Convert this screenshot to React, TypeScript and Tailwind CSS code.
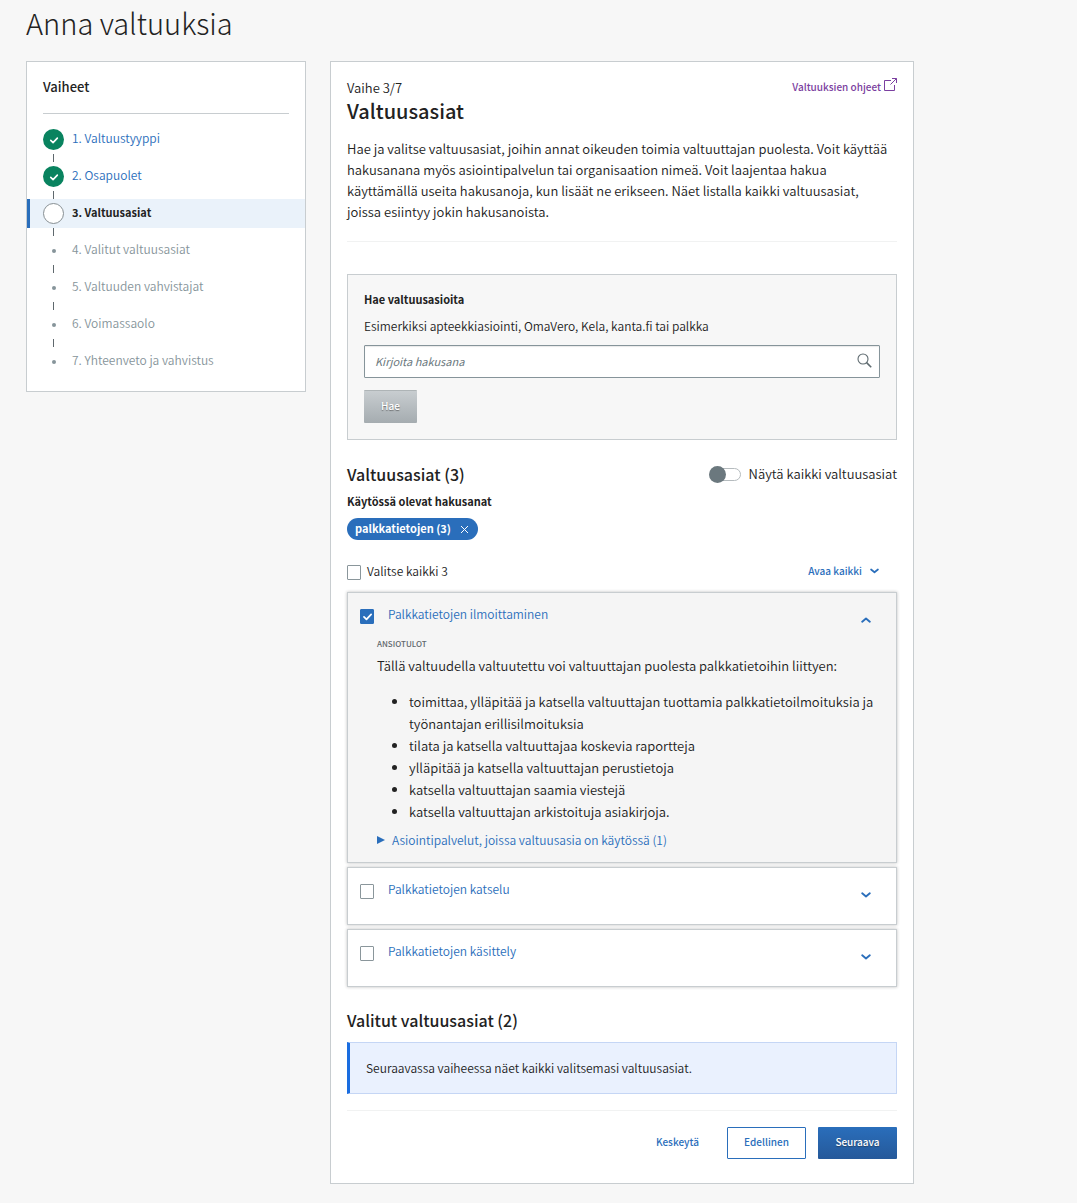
import { useState } from "react";
import type { ReactNode } from "react";

type Step = { name: string; state: "done" | "current" | "todo" };

const steps: Step[] = [
    { name: "Valtuustyyppi", state: "done" },
    { name: "Osapuolet", state: "done" },
    { name: "Valtuusasiat", state: "current" },
    { name: "Valitut valtuusasiat", state: "todo" },
    { name: "Valtuuden vahvistajat", state: "todo" },
    { name: "Voimassaolo", state: "todo" },
    { name: "Yhteenveto ja vahvistus", state: "todo" },
];

function CheckIcon({ className }: { className: string }) {
    return (
        <svg viewBox="0 0 14 14" className={className} fill="none" stroke="currentColor" aria-hidden="true">
            <path d="M3.2 7.4 5.9 10l5-5.2" strokeWidth="1.9" strokeLinecap="round" strokeLinejoin="round" />
        </svg>
    );
}

function Chevron({ up = false, className = "h-[6px] w-[10px]" }: { up?: boolean; className?: string }) {
    return (
        <svg viewBox="0 0 10 6" className={className} fill="none" stroke="currentColor" aria-hidden="true">
            <path
                d={up ? "M1.2 4.7 5 1.6l3.8 3.1" : "M1.2 1.3 5 4.4l3.8-3.1"}
                strokeWidth="1.9"
                strokeLinecap="round"
                strokeLinejoin="round"
            />
        </svg>
    );
}

function Checkbox({ id, checked, onChange }: { id: string; checked: boolean; onChange: () => void }) {
    return (
        <span className="grid h-[15px] w-[14px] shrink-0 place-items-center">
            <input
                id={id}
                type="checkbox"
                checked={checked}
                onChange={onChange}
                className="col-start-1 row-start-1 h-full w-full appearance-none rounded-[1px] border border-[#8a969b] bg-white checked:border-[#2a6ebb] checked:bg-[#2a6ebb]"
            />
            {checked && <CheckIcon className="pointer-events-none col-start-1 row-start-1 h-[13px] w-[13px] text-white" />}
        </span>
    );
}

function StepMarker({ state }: { state: Step["state"] }) {
    if (state === "done") {
        return (
            <span className="flex size-[21px] items-center justify-center rounded-full bg-[#09835f] text-white">
                <CheckIcon className="size-[12px]" />
            </span>
        );
    }
    if (state === "current") {
        return <span className="size-[21px] rounded-full border border-[#878f93] bg-white" />;
    }
    return <span className="size-[4px] rounded-full bg-[#86949a]" />;
}

function Steps() {
    return (
        <nav aria-labelledby="steps-title" className="w-[280px] shrink-0 border border-[#c8cdd0] bg-white pt-[14px] pb-[15px]">
            <h2 id="steps-title" className="mx-4 border-b border-[#c8cdd0] pb-[15px] text-[13px] leading-[22px] font-medium">
                Vaiheet
            </h2>
            <ol className="pt-[11px]">
                {steps.map((step, i) => (
                    <li key={step.name}>
                        {i > 0 && <span className="ml-[26px] block h-2 w-px bg-[#5f686d]" />}
                        <div
                            className={
                                step.state === "current"
                                    ? "flex h-[29px] items-center gap-2 border-l-[3px] border-[#2a6ebb] bg-[#eaf2fa] pl-[13px]"
                                    : "flex h-[29px] items-center gap-2 pl-4"
                            }
                        >
                            <span className="flex w-[21px] justify-center">
                                <StepMarker state={step.state} />
                            </span>
                            {step.state === "done" ? (
                                <a href="#" className="pb-1 text-[12px] leading-[18px] text-[#2a6ebb]">
                                    {i + 1}. {step.name}
                                </a>
                            ) : (
                                <span
                                    className={
                                        step.state === "current"
                                            ? "pb-1 text-[11px] leading-[18px] font-bold"
                                            : "pb-1 text-[12px] leading-[18px] text-[#86949a]"
                                    }
                                >
                                    {i + 1}. {step.name}
                                </span>
                            )}
                        </div>
                    </li>
                ))}
            </ol>
        </nav>
    );
}

type MatterProps = { id: string; title: string; defaultChecked?: boolean; children?: ReactNode };

function Matter({ id, title, defaultChecked = false, children }: MatterProps) {
    const [checked, setChecked] = useState(defaultChecked);
    const open = Boolean(children);

    return (
        <section
            className={
                open
                    ? "border border-[#c8cdd0] bg-[#f5f5f5] pb-[11px] shadow-[0_0_3px_rgba(41,41,41,0.3)]"
                    : "border border-[#c8cdd0] bg-white pb-[14px] shadow-[0_0_3px_rgba(41,41,41,0.3)]"
            }
        >
            <div className="flex h-[42px] items-start px-3 pt-4">
                <Checkbox id={id} checked={checked} onChange={() => setChecked(!checked)} />
                <label htmlFor={id} className="-mt-1 ml-[14px] text-[12px] leading-[18px] text-[#2a6ebb]">
                    {title}
                </label>
                <button
                    type="button"
                    aria-label={title}
                    aria-expanded={open}
                    className="mr-[13px] ml-auto pt-2 text-[#2a6ebb]"
                >
                    <Chevron up={open} />
                </button>
            </div>
            {children}
        </section>
    );
}

export default function App() {
    const [showAll, setShowAll] = useState(false);
    const [selectAll, setSelectAll] = useState(false);

    return (
        <div className="min-h-screen bg-[#f7f7f7] font-['Noto_Sans_CJK_JP','Noto_Sans',sans-serif] font-[350] text-[#222222]">
            <div className="max-w-[940px] px-[26px] pb-[19px]">
                <h1 className="pt-[2px] pb-[19px] text-[29px] leading-[40px] font-light">Anna valtuuksia</h1>

                <div className="flex items-start gap-6">
                    <Steps />

                    <main className="min-w-0 flex-1 border border-[#c8cdd0] bg-white px-4 pt-[15px] pb-6">
                        {/* intro */}
                        <div className="flex items-start justify-between">
                            <div>
                                <p className="text-[13px] leading-[22px]">Vaihe 3/7</p>
                                <h2 className="text-[20px] leading-[24px] font-medium">Valtuusasiat</h2>
                            </div>
                            <a href="#" className="flex gap-[3px] text-[10px] leading-[20px] font-medium text-[#7b3fa0]">
                                Valtuuksien ohjeet
                                <svg viewBox="0 0 13 13" className="mt-px size-[13px]" fill="none" stroke="currentColor">
                                    <path d="M7 2.5H.5v10h10V7M8 .5h4.5V5M12.5.5 6.5 6.5" />
                                </svg>
                            </a>
                        </div>
                        <div className="mt-[15px] border-b border-[#f1f2f2] pb-[19px]">
                            <p className="pr-2 text-[13px] leading-[21px]">
                                Hae ja valitse valtuusasiat, joihin annat oikeuden toimia valtuuttajan puolesta. Voit
                                käyttää hakusanana myös asiointipalvelun tai organisaation nimeä. Voit laajentaa hakua
                                käyttämällä useita hakusanoja, kun lisäät ne erikseen. Näet listalla kaikki valtuusasiat,
                                joissa esiintyy jokin hakusanoista.
                            </p>
                        </div>

                        {/* search */}
                        <form
                            className="mt-8 border border-[#c8cdd0] bg-[#f7f7f7] px-4 pt-[15px] pb-4"
                            onSubmit={(e) => e.preventDefault()}
                        >
                            <label htmlFor="search" className="block text-[11px] leading-[18px] font-bold">
                                Hae valtuusasioita
                            </label>
                            <p className="mt-[9px] text-[12px] leading-[18px]">
                                Esimerkiksi apteekkiasiointi, OmaVero, Kela, kanta.fi tai palkka
                            </p>
                            <div className="mt-[10px] flex h-[33px] items-center rounded-[1px] border border-[#86949a] bg-white pr-[7px] shadow-[inset_0_1px_1px_rgba(41,41,41,0.1)]">
                                <input
                                    id="search"
                                    type="text"
                                    placeholder="Kirjoita hakusana"
                                    className="h-full min-w-0 flex-1 px-[10px] pb-[2px] text-[11px] font-normal outline-none placeholder:text-[#6b787e] placeholder:italic"
                                />
                                <svg viewBox="0 0 15 15" className="mb-[3px] size-[15px] text-[#5f6b70]" fill="none" stroke="currentColor">
                                    <circle cx="6" cy="6" r="5" strokeWidth="1.1" />
                                    <path d="m9.6 9.6 4.6 4.6" strokeWidth="1.6" />
                                </svg>
                            </div>
                            <button
                                type="submit"
                                className="mt-3 block h-[33px] w-[53px] rounded-[1px] border-t border-[#aeb4b6] bg-linear-to-b from-[#c8cdd0] to-[#a5acb0] pb-1 text-[10px] font-medium text-white [text-shadow:0_1px_1px_rgba(41,41,41,0.5)]"
                            >
                                Hae
                            </button>
                        </form>

                        {/* results */}
                        <div className="mt-[22px] flex items-center justify-between">
                            <h3 className="text-[16px] leading-[24px] font-medium">Valtuusasiat (3)</h3>
                            <label className="flex items-center gap-2 text-[13px] leading-[22px]">
                                <input
                                    type="checkbox"
                                    role="switch"
                                    checked={showAll}
                                    onChange={() => setShowAll(!showAll)}
                                    className="peer sr-only"
                                />
                                <span className="flex h-[17px] w-8 items-center">
                                    <span className="z-10 size-[17px] shrink-0 rounded-full bg-[#6b787e]" />
                                    <span className="-ml-[12px] h-[13px] flex-1 rounded-full border border-[#b5bbbe] bg-white" />
                                </span>
                                Näytä kaikki valtuusasiat
                            </label>
                        </div>
                        <h4 className="mt-1 text-[11px] leading-[22px] font-bold">Käytössä olevat hakusanat</h4>
                        <button
                            type="button"
                            className="mt-[6px] flex h-[22px] items-center gap-[9px] rounded-full bg-[#2a6ebb] px-2 text-[11px] font-bold text-white"
                        >
                            <span className="pb-[2px]">palkkatietojen (3)</span>
                            <svg viewBox="0 0 9 9" className="mr-[1px] size-[9px]" stroke="currentColor" aria-hidden="true">
                                <path d="m1 1 7 7M8 1 1 8" />
                            </svg>
                        </button>

                        <div className="mt-[22px] flex h-5 items-center justify-between">
                            <div className="flex items-center gap-[6px]">
                                <Checkbox id="all" checked={selectAll} onChange={() => setSelectAll(!selectAll)} />
                                <label htmlFor="all" className="pb-[2px] text-[12px] leading-[18px]">
                                    Valitse kaikki 3
                                </label>
                            </div>
                            <button
                                type="button"
                                className="mr-[18px] flex items-center gap-2 pb-[2px] text-[10px] leading-[18px] font-medium text-[#2a6ebb]"
                            >
                                Avaa kaikki
                                <Chevron className="h-[6px] w-[9px]" />
                            </button>
                        </div>

                        <div className="mt-[10px] flex flex-col gap-1">
                            <Matter id="ilmoittaminen" title="Palkkatietojen ilmoittaminen" defaultChecked>
                                <div className="pr-4 pl-[29px] text-[13px] leading-[22px]">
                                    <p className="text-[8px] leading-[18px] font-medium text-[#5f686d]">ANSIOTULOT</p>
                                    <p className="mt-[2px]">
                                        Tällä valtuudella valtuutettu voi valtuuttajan puolesta palkkatietoihin liittyen:
                                    </p>
                                    <ul className="mt-[14px] list-disc pl-8">
                                        <li>
                                            toimittaa, ylläpitää ja katsella valtuuttajan tuottamia palkkatietoilmoituksia ja
                                            työnantajan erillisilmoituksia
                                        </li>
                                        <li>tilata ja katsella valtuuttajaa koskevia raportteja</li>
                                        <li>ylläpitää ja katsella valtuuttajan perustietoja</li>
                                        <li>katsella valtuuttajan saamia viestejä</li>
                                        <li>katsella valtuuttajan arkistoituja asiakirjoja.</li>
                                    </ul>
                                    <details className="mt-[6px] text-[12px] leading-[22px] text-[#2a6ebb]">
                                        <summary className="flex items-center gap-[7px]">
                                            <svg viewBox="0 0 8 8" className="size-2" fill="currentColor" aria-hidden="true">
                                                <path d="M0 0v8l8-4z" />
                                            </svg>
                                            Asiointipalvelut, joissa valtuusasia on käytössä (1)
                                        </summary>
                                    </details>
                                </div>
                            </Matter>
                            <Matter id="katselu" title="Palkkatietojen katselu" />
                            <Matter id="kasittely" title="Palkkatietojen käsittely" />
                        </div>

                        {/* selected */}
                        <h3 className="mt-[21px] text-[16px] leading-[24px] font-medium">Valitut valtuusasiat (2)</h3>
                        <p className="mt-[10px] border border-l-[3px] border-[#c5d6f5] border-l-[#1a6de0] bg-[#eaf1fe] px-4 py-[14px] text-[12px] leading-[22px]">
                            Seuraavassa vaiheessa näet kaikki valitsemasi valtuusasiat.
                        </p>

                        {/* actions */}
                        <div className="mt-4 flex justify-end gap-3 border-t border-[#f1f2f2] pt-4 text-[10px] font-medium">
                            <button type="button" className="h-8 px-4 pb-[3px] text-[#2a6ebb]">
                                Keskeytä
                            </button>
                            <button
                                type="button"
                                className="h-8 w-[79px] rounded-[1px] border border-[#2a6ebb] bg-white pb-[3px] text-[#2a6ebb]"
                            >
                                Edellinen
                            </button>
                            <button
                                type="button"
                                className="h-8 w-[79px] rounded-[1px] bg-linear-to-b from-[#2a6ebb] to-[#25599a] pb-[3px] text-white [text-shadow:0_1px_1px_rgba(41,41,41,0.5)]"
                            >
                                Seuraava
                            </button>
                        </div>
                    </main>
                </div>
            </div>
        </div>
    );
}
